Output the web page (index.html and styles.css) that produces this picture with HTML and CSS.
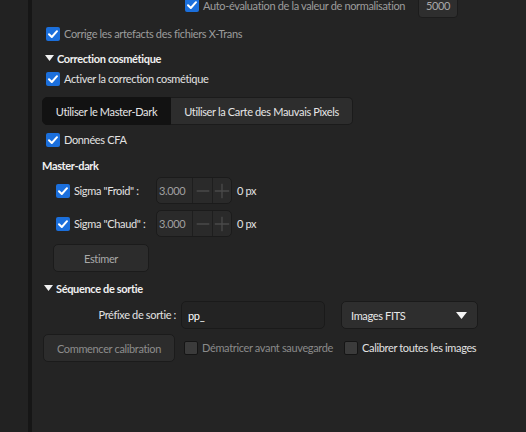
FILE: index.html
```html
<!DOCTYPE html>
<html lang="fr">
<head>
<meta charset="utf-8">
<link rel="stylesheet" href="styles.css">
</head>
<body>
<div class="app">
  <div class="sidebar"></div>
  <div class="divider"></div>
  <main class="panel">
    <div class="row row-top">
      <span class="check on"><svg viewBox="0 0 14 14"><path d="M3 7.2 L5.8 10 L11 4.2"/></svg></span>
      <span class="label dim auto-label">Auto-évaluation de la valeur de normalisation</span>
      <span class="numbox">5000</span>
    </div>
    <div class="row row-xtrans">
      <span class="check on"><svg viewBox="0 0 14 14"><path d="M3 7.2 L5.8 10 L11 4.2"/></svg></span>
      <span class="label dim">Corrige les artefacts des fichiers X-Trans</span>
    </div>
    <div class="row heading h-cosm">
      <svg class="tri" viewBox="0 0 9 6"><path d="M0 0 H9 L4.5 6 Z"/></svg>
      <span>Correction cosmétique</span>
    </div>
    <div class="row row-activ">
      <span class="check on"><svg viewBox="0 0 14 14"><path d="M3 7.2 L5.8 10 L11 4.2"/></svg></span>
      <span class="label">Activer la correction cosmétique</span>
    </div>
    <div class="tabs">
      <span class="tab active">Utiliser le Master-Dark</span>
      <span class="tab">Utiliser la Carte des Mauvais Pixels</span>
    </div>
    <div class="row row-cfa">
      <span class="check on"><svg viewBox="0 0 14 14"><path d="M3 7.2 L5.8 10 L11 4.2"/></svg></span>
      <span class="label">Données CFA</span>
    </div>
    <div class="row subheading">Master-dark</div>
    <div class="row sigma s1">
      <span class="check on"><svg viewBox="0 0 14 14"><path d="M3 7.2 L5.8 10 L11 4.2"/></svg></span>
      <span class="label sigma-label">Sigma "Froid" :</span>
      <span class="spin">
        <span class="spin-val">3.000</span>
        <span class="spin-btn"><svg viewBox="0 0 20 20"><path d="M3 10 H17"/></svg></span>
        <span class="spin-btn"><svg viewBox="0 0 20 20"><path d="M2 10 H18 M10 2 V18"/></svg></span>
      </span>
      <span class="label unit">0 px</span>
    </div>
    <div class="row sigma s2">
      <span class="check on"><svg viewBox="0 0 14 14"><path d="M3 7.2 L5.8 10 L11 4.2"/></svg></span>
      <span class="label sigma-label">Sigma "Chaud" :</span>
      <span class="spin">
        <span class="spin-val">3.000</span>
        <span class="spin-btn"><svg viewBox="0 0 20 20"><path d="M3 10 H17"/></svg></span>
        <span class="spin-btn"><svg viewBox="0 0 20 20"><path d="M2 10 H18 M10 2 V18"/></svg></span>
      </span>
      <span class="label unit">0 px</span>
    </div>
    <div class="row row-estimer">
      <span class="button btn-estimer">Estimer</span>
    </div>
    <div class="row heading h-seq">
      <svg class="tri" viewBox="0 0 9 6"><path d="M0 0 H9 L4.5 6 Z"/></svg>
      <span>Séquence de sortie</span>
    </div>
    <div class="row row-prefix">
      <span class="label prefix-label">Préfixe de sortie :</span>
      <span class="textbox">pp_</span>
      <span class="combo">Images FITS<svg class="combo-tri" viewBox="0 0 11 7"><path d="M0 0 H11 L5.5 7 Z"/></svg></span>
    </div>
    <div class="row row-bottom">
      <span class="button btn-start">Commencer calibration</span>
      <span class="check off"></span>
      <span class="label dim">Dématricer avant sauvegarde</span>
      <span class="check off"></span>
      <span class="label">Calibrer toutes les images</span>
    </div>
  </main>
</div>
</body>
</html>
```

FILE: styles.css
```css
* { box-sizing: border-box; }
html, body { margin: 0; padding: 0; }
body {
  background: #242424;
  font-family: "Lato", "Noto Sans", "DejaVu Sans", sans-serif;
  font-size: 11px;
  letter-spacing: -0.35px;
  color: #e2e2e2;
  width: 526px;
  height: 432px;
  overflow: hidden;
}
.app { display: flex; height: 432px; }
.sidebar { width: 28px; background: #222222; flex: none; }
.divider { width: 4px; background: #161616; flex: none; }
.panel { flex: 1; padding-left: 10px; background: #242424; }

.row { display: flex; align-items: center; height: 20px; white-space: nowrap; }
.label { line-height: 14px; }
.dim { color: #9c9c9c; }

.check {
  width: 14px; height: 14px; border-radius: 2px; flex: none;
  display: inline-flex; align-items: center; justify-content: center;
  margin-right: 4px;
}
.check.on { background: #1b6fdc; }
.check.on svg { width: 14px; height: 14px; }
.check.on path { fill: none; stroke: #ffffff; stroke-width: 2; stroke-linecap: round; stroke-linejoin: round; }
.check.off { background: #3b3b3b; border: 1px solid #151515; }

.row-top { margin-top: -8px; height: 26px; padding-left: 143px; }
.auto-label { width: 215px; flex: none; padding-top: 2px; }
.numbox {
  width: 40px; height: 26px; background: #2e2e2e; flex: none;
  border-radius: 4px; color: #a8a8a8; padding-left: 7px;
  display: flex; align-items: center; border: 1px solid #1c1c1c;
}
.row-xtrans { margin-top: 6px; padding-left: 4px; }
.heading { font-weight: bold; color: #f0f0f0; padding-left: 3px; }
.tri { width: 9px; height: 6px; margin-right: 3px; }
.tri path { fill: #f0f0f0; }
.h-cosm { margin-top: 4px; }
.row-activ { margin-top: 1px; padding-left: 4px; }

.tabs { display: flex; margin-top: 8px; height: 28px; width: 311px; }
.tab {
  display: flex; align-items: center; justify-content: center;
  background: #2d2d2d; color: #e6e6e6; border: 1px solid #1b1b1b;
}
.tab:first-child { width: 129px; border-radius: 5px 0 0 5px; }
.tab:last-child { width: 182px; border-radius: 0 5px 5px 0; border-left: none; }
.tab.active { background: #121212; border-color: #121212; }

.row-cfa { margin-top: 5px; padding-left: 4px; }
.subheading { margin-top: 5px; font-weight: bold; color: #f0f0f0; }

.sigma { height: 27px; padding-left: 14px; }
.s1 { margin-top: 2px; }
.s2 { margin-top: 6px; }
.sigma-label { width: 82px; flex: none; }
.spin {
  display: flex; height: 27px; width: 76px; border: 1px solid #1b1b1b; flex: none;
  border-radius: 5px; background: #2a2a2a; overflow: hidden;
}
.spin-val { width: 36px; display: flex; align-items: center; padding-left: 2px; color: #a0a0a0; }
.spin-btn {
  display: flex; align-items: center; justify-content: center;
  border-left: 1px solid #1e1e1e; width: 20px;
}
.spin-btn:last-child { width: 19px; }
.spin-btn svg { width: 18px; height: 18px; }
.spin-btn path { stroke: #4a4a4a; stroke-width: 1.5; fill: none; }
.unit { margin-left: 5px; }

.button {
  display: flex; align-items: center; justify-content: center; height: 28px;
  background: #2c2c2c; border: 1px solid #1b1b1b; border-radius: 5px; color: #a9a9a9;
}
.row-estimer { margin-top: 7px; height: 28px; padding-left: 11px; }
.btn-estimer { width: 96px; }
.h-seq { margin-top: 6px; padding-left: 2px; }

.row-prefix { margin-top: 3px; height: 28px; }
.prefix-label { width: 139px; flex: none; text-align: right; padding-right: 5px; color: #e2e2e2; }
.textbox {
  width: 144px; height: 28px; border: 1px solid #1a1a1a; border-radius: 5px; flex: none;
  background: #232323; display: flex; align-items: center; padding-left: 6px; color: #ffffff;
}
.combo {
  margin-left: 16px; width: 137px; height: 28px; border: 1px solid #1a1a1a; border-radius: 5px; flex: none;
  background: #2e2e2e; display: flex; align-items: center; padding-left: 9px; color: #e8e8e8;
  justify-content: space-between; padding-right: 10px;
}
.combo-tri { width: 11px; height: 7px; }
.combo-tri path { fill: #f4f4f4; }

.row-bottom { margin-top: 5px; height: 28px; padding-left: 1px; }
.btn-start { width: 132px; color: #8c8c8c; margin-right: 9px; flex: none; }
.row-bottom .dim { color: #8a8a8a; margin-right: 11px; }
```
